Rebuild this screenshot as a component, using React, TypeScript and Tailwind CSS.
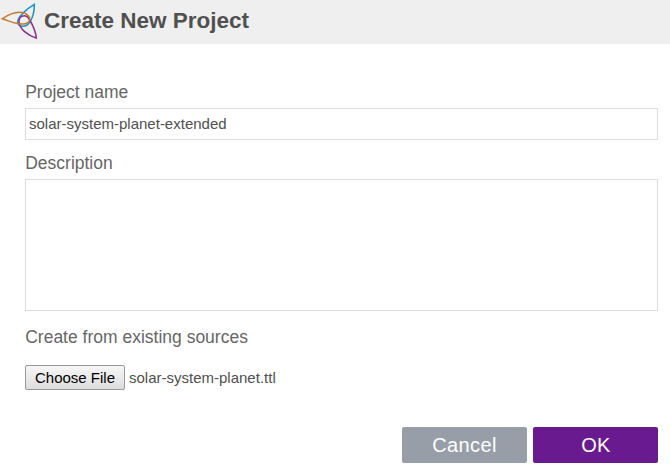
import React from "react";

function Logo() {
  return (
    <svg width="42" height="42" viewBox="0 0 42 42" fill="none" strokeWidth="1.5" strokeLinejoin="miter" className="shrink-0">
      <path d="M34.3 4.3 C27 8.5 17.7 17 17.7 22 C17.9 27 25.5 28.2 29.5 22.5 C33 17.5 34.5 11 34.3 4.3Z" stroke="#1693c9" />
      <path d="M36.3 38.1 C35.8 31 33 25.5 29.5 19.5 C26 13.5 19 15.5 19 21.5 C19.2 29 28 35.5 36.3 38.1Z" stroke="#8a3092" />
      <path d="M2.3 18.8 C8 14.8 14 12 20.5 12.3 C26 12.5 29.8 16 29.6 19.5 C29.2 24.3 22 24.6 17.5 23.6 C12 22.5 7 20.2 2.3 18.8Z" stroke="#c4782a" />
    </svg>
  );
}

export default function App() {
  return (
    <main className="h-[476px] w-[670px] overflow-hidden bg-white font-['Liberation_Sans',Arial,sans-serif] text-[#58585a]">
      <header className="flex h-11 items-start bg-[#efefef]">
        <Logo />
        <h1 className="mt-[7px] ml-0.5 text-[22.5px] leading-7 font-bold text-[#505050]">Create New Project</h1>
      </header>
      <form className="flex flex-col pt-[38px] pr-3 pl-[25px]" onSubmit={(e) => e.preventDefault()}>
        <label htmlFor="name" className="h-[26px] pl-[0.2px] text-[17.5px] leading-5 text-[#666]">Project name</label>
        <input id="name" defaultValue="solar-system-planet-extended" className="h-8 border border-[#ddd] px-[3px] pb-0.5 text-[15px] text-[#505050] outline-none" />
        <label htmlFor="description" className="mt-[13px] h-[26px] pl-[0.2px] text-[17.5px] leading-5 text-[#666]">Description</label>
        <textarea id="description" className="h-[132px] resize-none border border-[#ddd] outline-none" />
        <div className="mt-4 pl-[0.2px] text-[17.5px] leading-5 text-[#666]">Create from existing sources</div>
        <div className="mt-[18px] flex h-[25px] items-center gap-1 text-[15px]">
          <button type="button" className="h-[25px] w-[100px] rounded-[2px] border border-[#999] bg-linear-to-b from-[#f6f6f6] to-[#dddddd] leading-5 text-black">Choose File</button>
          <span className="leading-5 text-[#505050]">solar-system-planet.ttl</span>
        </div>
        <div className="mt-[37px] flex justify-end gap-1.5 text-[20px] tracking-[0.4px] text-white">
          <button type="button" className="h-9 w-[125px] rounded-[2px] bg-[#979ea8]">Cancel</button>
          <button type="submit" className="h-9 w-[125px] rounded-[2px] bg-[#6a1a8f] pl-px">OK</button>
        </div>
      </form>
    </main>
  );
}
